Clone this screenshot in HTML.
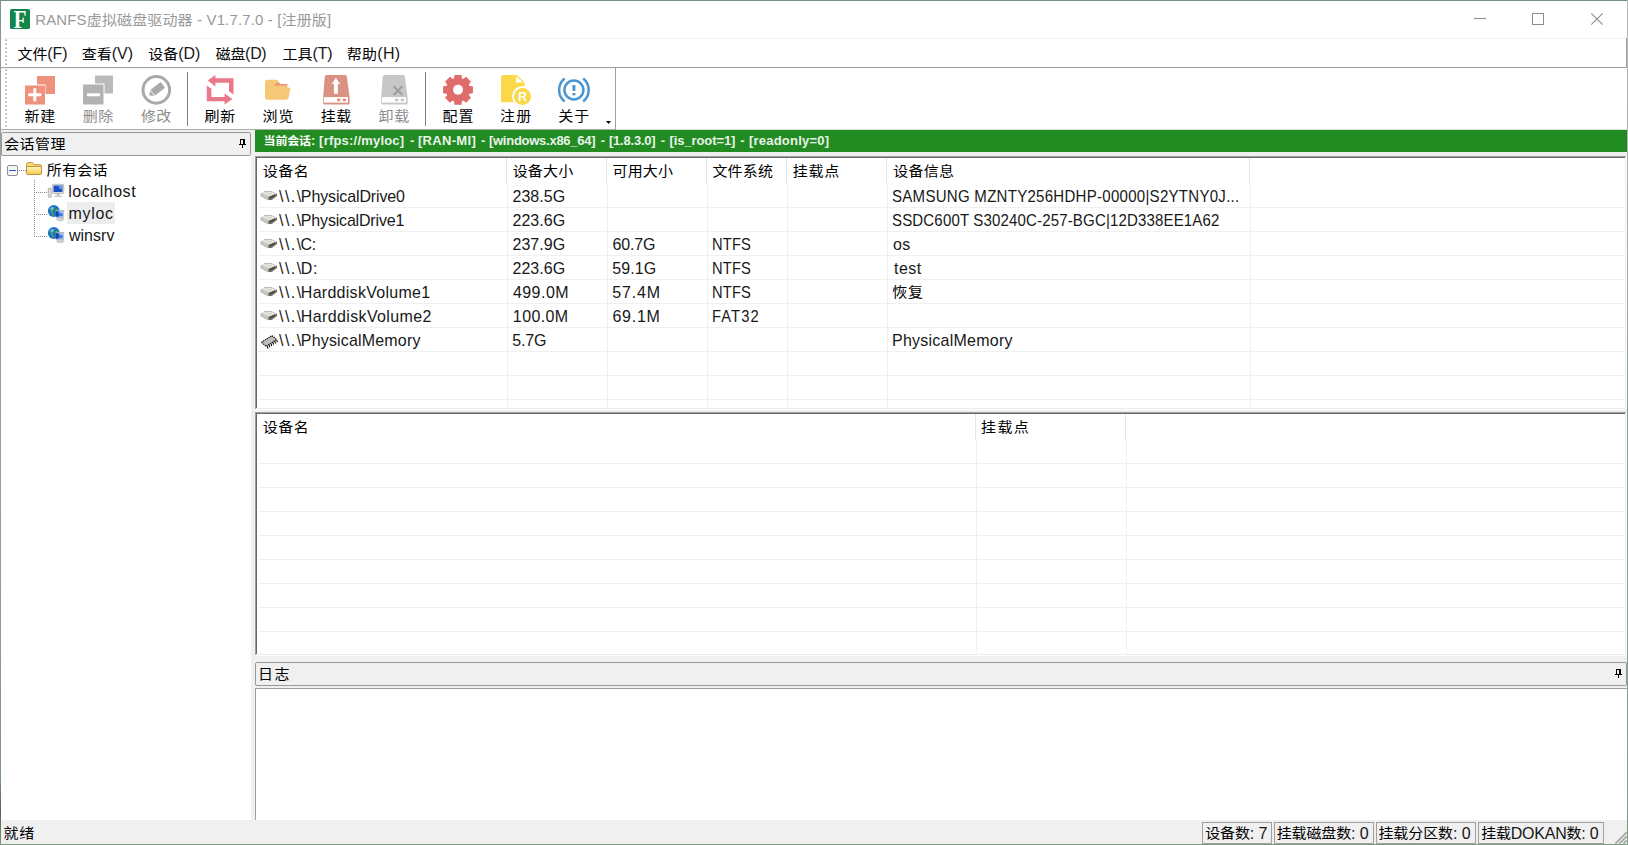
<!DOCTYPE html>
<html lang="zh-CN"><head><meta charset="utf-8"><title>RANFS</title>
<style>
html,body{margin:0;padding:0}
body{width:1628px;height:845px;overflow:hidden;position:relative;background:#fff;
 font-family:"Liberation Sans","Noto Sans CJK SC",sans-serif;font-size:15px;color:#000}
.a{position:absolute}
.t{position:absolute;white-space:pre;line-height:20px;height:20px;transform-origin:0 50%}
.c{display:inline-block;font-size:15px;transform:translateY(var(--cy,0px)) scaleY(.93);transform-origin:0 76%}
.l{display:inline-block;font-size:16px;opacity:.9;transform:scaleY(.98);transform-origin:0 77.7%}
.tt .l{font-size:15px;transform-origin:0 76%;opacity:1}
.b{font-weight:bold}
.b .l{font-size:13px;transform-origin:0 72.6%}
.b .c{font-size:12px;transform-origin:0 70.8%}
svg{position:absolute;overflow:visible}
</style></head>
<body>
<div class="a" style="left:0px;top:0px;width:1628px;height:845px;background:#fff;"></div>
<div class="a" style="left:1px;top:130px;width:1626px;height:690px;background:#f0f0f0;"></div>
<div class="a" style="left:10px;top:9px;width:20px;height:20px;background:#13854b;border-radius:1.5px;overflow:hidden;"><span style="position:absolute;left:-10px;top:-0.9px;width:40px;text-align:center;color:#fff;font:bold 26px/24px 'Liberation Serif',serif;transform:scaleX(.8)">F</span></div>
<div class="a" style="left:1474px;top:18px;width:12px;height:1px;background:#8c8c8c;"></div>
<div class="a" style="left:1532px;top:13px;width:10px;height:10px;border:1px solid #8c8c8c;"></div>
<svg style="left:1591px;top:13px" width="12" height="12" viewBox="0 0 12 12"><path d="M0.3 0.3L11.7 11.7M11.7 0.3L0.3 11.7" stroke="#8c8c8c" stroke-width="1.1" fill="none"/></svg>
<div class="a" style="left:1px;top:38px;width:1625px;height:1px;background:#f1f1fb;"></div>
<div class="a" style="left:1px;top:67px;width:1626px;height:1px;background:#a0a0a0;"></div>
<div class="a" style="left:1626px;top:38px;width:1px;height:30px;background:#a0a0a0;"></div>
<svg style="left:4px;top:39px" width="4" height="27" viewBox="0 0 4 27"><rect x="1" y="0" width="2" height="2" fill="#d2d2d2"/><rect x="2" y="1" width="1" height="1" fill="#a6a6a6"/><rect x="1" y="4" width="2" height="2" fill="#d2d2d2"/><rect x="2" y="5" width="1" height="1" fill="#a6a6a6"/><rect x="1" y="8" width="2" height="2" fill="#d2d2d2"/><rect x="2" y="9" width="1" height="1" fill="#a6a6a6"/><rect x="1" y="12" width="2" height="2" fill="#d2d2d2"/><rect x="2" y="13" width="1" height="1" fill="#a6a6a6"/><rect x="1" y="16" width="2" height="2" fill="#d2d2d2"/><rect x="2" y="17" width="1" height="1" fill="#a6a6a6"/><rect x="1" y="20" width="2" height="2" fill="#d2d2d2"/><rect x="2" y="21" width="1" height="1" fill="#a6a6a6"/><rect x="1" y="24" width="2" height="2" fill="#d2d2d2"/><rect x="2" y="25" width="1" height="1" fill="#a6a6a6"/></svg>
<div class="a" style="left:1px;top:68px;width:614px;height:1px;background:#f3f3fb;"></div>
<div class="a" style="left:1px;top:129px;width:615px;height:1px;background:#adadad;"></div>
<div class="a" style="left:615px;top:68px;width:1px;height:62px;background:#a0a0a0;"></div>
<div class="a" style="left:616px;top:129px;width:1011px;height:1px;background:#e3e3e3;"></div>
<svg style="left:4px;top:69px" width="4" height="59" viewBox="0 0 4 59"><rect x="1" y="0" width="2" height="2" fill="#d2d2d2"/><rect x="2" y="1" width="1" height="1" fill="#a6a6a6"/><rect x="1" y="4" width="2" height="2" fill="#d2d2d2"/><rect x="2" y="5" width="1" height="1" fill="#a6a6a6"/><rect x="1" y="8" width="2" height="2" fill="#d2d2d2"/><rect x="2" y="9" width="1" height="1" fill="#a6a6a6"/><rect x="1" y="12" width="2" height="2" fill="#d2d2d2"/><rect x="2" y="13" width="1" height="1" fill="#a6a6a6"/><rect x="1" y="16" width="2" height="2" fill="#d2d2d2"/><rect x="2" y="17" width="1" height="1" fill="#a6a6a6"/><rect x="1" y="20" width="2" height="2" fill="#d2d2d2"/><rect x="2" y="21" width="1" height="1" fill="#a6a6a6"/><rect x="1" y="24" width="2" height="2" fill="#d2d2d2"/><rect x="2" y="25" width="1" height="1" fill="#a6a6a6"/><rect x="1" y="28" width="2" height="2" fill="#d2d2d2"/><rect x="2" y="29" width="1" height="1" fill="#a6a6a6"/><rect x="1" y="32" width="2" height="2" fill="#d2d2d2"/><rect x="2" y="33" width="1" height="1" fill="#a6a6a6"/><rect x="1" y="36" width="2" height="2" fill="#d2d2d2"/><rect x="2" y="37" width="1" height="1" fill="#a6a6a6"/><rect x="1" y="40" width="2" height="2" fill="#d2d2d2"/><rect x="2" y="41" width="1" height="1" fill="#a6a6a6"/><rect x="1" y="44" width="2" height="2" fill="#d2d2d2"/><rect x="2" y="45" width="1" height="1" fill="#a6a6a6"/><rect x="1" y="48" width="2" height="2" fill="#d2d2d2"/><rect x="2" y="49" width="1" height="1" fill="#a6a6a6"/><rect x="1" y="52" width="2" height="2" fill="#d2d2d2"/><rect x="2" y="53" width="1" height="1" fill="#a6a6a6"/><rect x="1" y="56" width="2" height="2" fill="#d2d2d2"/><rect x="2" y="57" width="1" height="1" fill="#a6a6a6"/></svg>
<div class="a" style="left:187px;top:72px;width:1px;height:54px;background:#808080;"></div>
<div class="a" style="left:425px;top:72px;width:1px;height:54px;background:#808080;"></div>
<svg style="left:606px;top:121px" width="5" height="3" viewBox="0 0 5 3"><path d="M0 0h5l-2.5 3z" fill="#000"/></svg>
<svg style="left:0px;top:68px" width="620" height="62" viewBox="0 68 620 62"><rect x="37" y="76" width="18" height="18" fill="#ee917d"/><rect x="24.5" y="84.5" width="21" height="20" fill="#fff"/><rect x="25" y="85.5" width="20" height="19" fill="#ee917d"/><path d="M28.3 93.3h13v3h-13z M33.3 88.3h3v13h-3z" fill="#fff"/><rect x="95" y="75.5" width="18" height="18" fill="#b9bbb9"/><rect x="82.5" y="83.5" width="22" height="21" fill="#fff"/><rect x="83" y="84.5" width="20.5" height="20" fill="#b1b3b1"/><rect x="87" y="93.3" width="13" height="3" fill="#fff"/><circle cx="156.3" cy="89.9" r="13.3" fill="none" stroke="#a9a9a9" stroke-width="3"/><g transform="rotate(-38 156.3 89.9)"><path d="M147.2 89.9l4.2-3.6h13.2v7.2h-13.2z" fill="#a9a9a9"/><path d="M151.4 86.3v7.2" stroke="#fff" stroke-width="0.9"/></g><path d="M207.7 80.6L215.4 75v3.3H233.5V94.4L229 91.2V82.7H215.4v3.7z" fill="#e8788a"/><path d="M232.4 99L224.6 104.6v-3.3H206.8V85.5L211.4 88.8V97.1H224.6v-3.7z" fill="#e8788a"/><path d="M265 82.2q0-2.4 2.4-2.4h8.6q1.3 0 2.1 1l2.4 3.2h5.3q1.6 0 1.6 1.6v2h1.3q2 0 1.6 1.9l-1.7 8.2q-.5 2.1-2.6 2.1h-18.6q-2.4 0-2.4-2.4z" fill="#f5c878"/><path d="M273.8 85.8l3.8-3.5 2.9 1.7h6.9v1.8z" fill="#f0957c"/><path d="M324.8 76.5q.2-1.5 1.7-1.5h18.6q1.5 0 1.7 1.5l2.8 20.5v6.1q0 1.5-1.5 1.5h-23.4q-1.5 0-1.5-1.5v-6.1z" fill="#d99283"/><rect x="324" y="97.1" width="24" height="5.5" fill="#fff"/><rect x="337" y="98.6" width="3.3" height="2.6" fill="#d99283"/><rect x="342.8" y="98.6" width="3.3" height="2.6" fill="#d99283"/><path d="M335.9 77.8l4.2 6.2h-2.2v9.8h-4v-9.8h-2.2z" fill="#fff"/><path d="M382.8 76.5q.2-1.5 1.7-1.5h18.6q1.5 0 1.7 1.5l2.8 20.5v6.1q0 1.5-1.5 1.5h-23.4q-1.5 0-1.5-1.5v-6.1z" fill="#c6c7c8"/><rect x="382" y="97.1" width="24" height="5.5" fill="#fff"/><rect x="395" y="98.6" width="3.3" height="2.6" fill="#c6c7c8"/><rect x="400.8" y="98.6" width="3.3" height="2.6" fill="#c6c7c8"/><path d="M393.6 86.2l8.8 8.8M402.4 86.2l-8.8 8.8" stroke="#a29c9c" stroke-width="2" fill="none"/><path d="M454.11 78.45 L454.51 74.90 L461.49 74.90 L461.89 78.45 L463.28 79.02 L466.07 76.80 L471.00 81.73 L468.78 84.52 L469.35 85.91 L472.90 86.31 L472.90 93.29 L469.35 93.69 L468.78 95.08 L471.00 97.87 L466.07 102.80 L463.28 100.58 L461.89 101.15 L461.49 104.70 L454.51 104.70 L454.11 101.15 L452.72 100.58 L449.93 102.80 L445.00 97.87 L447.22 95.08 L446.65 93.69 L443.10 93.29 L443.10 86.31 L446.65 85.91 L447.22 84.52 L445.00 81.73 L449.93 76.80 L452.72 79.02Z" fill="#e06b6b"/><circle cx="458" cy="89.8" r="11.6" fill="#e06b6b"/><circle cx="458" cy="89.8" r="5" fill="#fff"/><path d="M501 77.2q0-2.2 2.2-2.2h13.6l7.7 7.3v20h-23.5z" fill="#f9d84a"/><path d="M516 76.2l7.2 6.3h-7.2z" fill="#fff"/><circle cx="522.5" cy="96.4" r="10.4" fill="#fff"/><circle cx="522.5" cy="96.4" r="8.5" fill="#f9d84a"/><text x="522.6" y="101" text-anchor="middle" font-family="'Liberation Sans',sans-serif" font-weight="bold" font-size="12.5" fill="#fff">R</text><circle cx="573.9" cy="90" r="9.5" fill="none" stroke="#4a96d2" stroke-width="2.5"/><path d="M564.59 78.50A14.8 14.8 0 0 0 564.59 101.50" fill="none" stroke="#4a96d2" stroke-width="2.5"/><path d="M583.21 78.50A14.8 14.8 0 0 1 583.21 101.50" fill="none" stroke="#4a96d2" stroke-width="2.5"/><rect x="572.5" y="85" width="2.9" height="6" fill="#4a96d2"/><rect x="572.5" y="93" width="2.9" height="2.3" fill="#4a96d2"/></svg>
<div class="a" style="left:1px;top:156px;width:250px;height:664px;background:#fff;"></div>
<div class="a" style="left:1px;top:132px;width:250px;height:24px;background:#f0f0f0;box-sizing:border-box;border:1px solid #989898;border-radius:2px;"></div>
<svg style="left:239px;top:139px" width="7" height="9" viewBox="0 0 7 9"><path d="M1 0h5v5h1v1h-3v3h-1v-3h-3v-1h1z M2 1v4h2v-4z" fill="#000" fill-rule="evenodd"/></svg>
<svg style="left:0px;top:156px" width="252" height="100" viewBox="0 156 252 100"><rect x="7.5" y="165.5" width="10" height="10" rx="1.5" fill="#f6f6f6" stroke="#8f8f8f"/><rect x="9" y="170" width="7" height="1" fill="#2757d6"/><g fill="#8c8c8c"><rect x="19" y="170" width="1" height="1"/><rect x="21" y="170" width="1" height="1"/><rect x="23" y="170" width="1" height="1"/><rect x="25" y="170" width="1" height="1"/><rect x="34" y="180" width="1" height="1"/><rect x="34" y="182" width="1" height="1"/><rect x="34" y="184" width="1" height="1"/><rect x="34" y="186" width="1" height="1"/><rect x="34" y="188" width="1" height="1"/><rect x="34" y="190" width="1" height="1"/><rect x="34" y="192" width="1" height="1"/><rect x="34" y="194" width="1" height="1"/><rect x="34" y="196" width="1" height="1"/><rect x="34" y="198" width="1" height="1"/><rect x="34" y="200" width="1" height="1"/><rect x="34" y="202" width="1" height="1"/><rect x="34" y="204" width="1" height="1"/><rect x="34" y="206" width="1" height="1"/><rect x="34" y="208" width="1" height="1"/><rect x="34" y="210" width="1" height="1"/><rect x="34" y="212" width="1" height="1"/><rect x="34" y="214" width="1" height="1"/><rect x="34" y="216" width="1" height="1"/><rect x="34" y="218" width="1" height="1"/><rect x="34" y="220" width="1" height="1"/><rect x="34" y="222" width="1" height="1"/><rect x="34" y="224" width="1" height="1"/><rect x="34" y="226" width="1" height="1"/><rect x="34" y="228" width="1" height="1"/><rect x="34" y="230" width="1" height="1"/><rect x="34" y="232" width="1" height="1"/><rect x="34" y="234" width="1" height="1"/><rect x="34" y="236" width="1" height="1"/><rect x="36" y="192" width="1" height="1"/><rect x="38" y="192" width="1" height="1"/><rect x="40" y="192" width="1" height="1"/><rect x="42" y="192" width="1" height="1"/><rect x="44" y="192" width="1" height="1"/><rect x="46" y="192" width="1" height="1"/><rect x="36" y="214" width="1" height="1"/><rect x="38" y="214" width="1" height="1"/><rect x="40" y="214" width="1" height="1"/><rect x="42" y="214" width="1" height="1"/><rect x="44" y="214" width="1" height="1"/><rect x="46" y="214" width="1" height="1"/><rect x="36" y="236" width="1" height="1"/><rect x="38" y="236" width="1" height="1"/><rect x="40" y="236" width="1" height="1"/><rect x="42" y="236" width="1" height="1"/><rect x="44" y="236" width="1" height="1"/><rect x="46" y="236" width="1" height="1"/></g><defs><linearGradient id="fg" x1="0" y1="0" x2="0" y2="1"><stop offset="0" stop-color="#fff7c4"/><stop offset="1" stop-color="#f2cb52"/></linearGradient></defs><path d="M26.5 173.5v-9q0-2 2-2h3.2q1 0 1.6.9l.9 1.3h5.6q1.7 0 1.7 1.7v1.6" fill="#f7dc7c" stroke="#c4922b"/><rect x="26.5" y="166.5" width="15" height="8" rx="1.3" fill="url(#fg)" stroke="#c4922b"/><rect x="67" y="202" width="48" height="22" fill="#ededed"/><rect x="48.3" y="188.3" width="2.8" height="9" rx=".6" fill="#e2e2e2" stroke="#8c8c8c" stroke-width=".6"/><rect x="52.3" y="184.3" width="11.4" height="9.2" rx=".8" fill="#e9e9e9" stroke="#9a9a9a" stroke-width=".6"/><rect x="53.5" y="185.5" width="9" height="6.6" fill="#1d4fc4"/><path d="M58 185.5h4.5v3.2l-2 .8z" fill="#6b9be8"/><rect x="56.8" y="193.6" width="2.6" height="2" fill="#b8b8b8"/><rect x="54.5" y="195.5" width="7.4" height="1.5" rx=".6" fill="#c9c9c9"/><ellipse cx="60.3" cy="219.3" rx="3.8" ry="1.4" fill="#d4d4d4" stroke="#a8a8a8" stroke-width=".5"/><circle cx="53.8" cy="211" r="5.9" fill="#1f6fd6"/><path d="M50 209 q1.5-2.5 4-2.2 l.5 2-2 1.2.8 2.5-2 .5z M55 209.5 l2.5-1 1.5 1.5-.5 2.5-2.5.5z M51.5 213 l2 .3 .6 2-1.4 1.2z" fill="#3fae3a"/><circle cx="52" cy="208.6" r="1.6" fill="#8cc4ff" opacity=".7"/><rect x="56.2" y="210.5" width="7.6" height="7" fill="#e4ebf5" stroke="#8e9db5" stroke-width=".6"/><rect x="57.2" y="211.5" width="5.6" height="5" fill="#3b7be0"/><path d="M57.2 211.5 h5.6 v2.2z" fill="#9cc6f7"/><rect x="56" y="211.2" width="2.6" height="5.5" fill="#173fa8"/><ellipse cx="60.3" cy="241.3" rx="3.8" ry="1.4" fill="#d4d4d4" stroke="#a8a8a8" stroke-width=".5"/><circle cx="53.8" cy="233" r="5.9" fill="#1f6fd6"/><path d="M50 231 q1.5-2.5 4-2.2 l.5 2-2 1.2.8 2.5-2 .5z M55 231.5 l2.5-1 1.5 1.5-.5 2.5-2.5.5z M51.5 235 l2 .3 .6 2-1.4 1.2z" fill="#3fae3a"/><circle cx="52" cy="230.6" r="1.6" fill="#8cc4ff" opacity=".7"/><rect x="56.2" y="232.5" width="7.6" height="7" fill="#e4ebf5" stroke="#8e9db5" stroke-width=".6"/><rect x="57.2" y="233.5" width="5.6" height="5" fill="#3b7be0"/><path d="M57.2 233.5 h5.6 v2.2z" fill="#9cc6f7"/><rect x="56" y="233.2" width="2.6" height="5.5" fill="#173fa8"/></svg>
<div class="a" style="left:255px;top:130px;width:1372px;height:22px;background:#228b22;"></div>
<div class="a" style="left:255px;top:156px;width:1372px;height:254px;background:#fff;"></div><div class="a" style="left:255px;top:156px;width:1371px;height:1px;background:#a0a0a0;"></div><div class="a" style="left:255px;top:156px;width:1px;height:253px;background:#a0a0a0;"></div><div class="a" style="left:256px;top:157px;width:1369px;height:1px;background:#696969;"></div><div class="a" style="left:256px;top:157px;width:1px;height:251px;background:#696969;"></div><div class="a" style="left:256px;top:408px;width:1370px;height:1px;background:#ececec;"></div><div class="a" style="left:1625px;top:157px;width:1px;height:252px;background:#ececec;"></div><div class="a" style="left:258px;top:207px;width:1367px;height:1px;background:#f0f0f0;"></div><div class="a" style="left:258px;top:231px;width:1367px;height:1px;background:#f0f0f0;"></div><div class="a" style="left:258px;top:255px;width:1367px;height:1px;background:#f0f0f0;"></div><div class="a" style="left:258px;top:279px;width:1367px;height:1px;background:#f0f0f0;"></div><div class="a" style="left:258px;top:303px;width:1367px;height:1px;background:#f0f0f0;"></div><div class="a" style="left:258px;top:327px;width:1367px;height:1px;background:#f0f0f0;"></div><div class="a" style="left:258px;top:351px;width:1367px;height:1px;background:#f0f0f0;"></div><div class="a" style="left:258px;top:375px;width:1367px;height:1px;background:#f0f0f0;"></div><div class="a" style="left:258px;top:399px;width:1367px;height:1px;background:#f0f0f0;"></div><div class="a" style="left:506px;top:158px;width:1px;height:26px;background:#e5e5e5;"></div><div class="a" style="left:507px;top:184px;width:1px;height:224px;background:#f0f0f0;"></div><div class="a" style="left:606px;top:158px;width:1px;height:26px;background:#e5e5e5;"></div><div class="a" style="left:607px;top:184px;width:1px;height:224px;background:#f0f0f0;"></div><div class="a" style="left:706px;top:158px;width:1px;height:26px;background:#e5e5e5;"></div><div class="a" style="left:707px;top:184px;width:1px;height:224px;background:#f0f0f0;"></div><div class="a" style="left:786px;top:158px;width:1px;height:26px;background:#e5e5e5;"></div><div class="a" style="left:787px;top:184px;width:1px;height:224px;background:#f0f0f0;"></div><div class="a" style="left:886px;top:158px;width:1px;height:26px;background:#e5e5e5;"></div><div class="a" style="left:887px;top:184px;width:1px;height:224px;background:#f0f0f0;"></div><div class="a" style="left:1249px;top:158px;width:1px;height:26px;background:#e5e5e5;"></div><div class="a" style="left:1250px;top:184px;width:1px;height:224px;background:#f0f0f0;"></div>
<svg style="left:257px;top:184px" width="24" height="170" viewBox="257 184 24 170"><g transform="translate(0 0)"><path d="M261 193.4L268.6 196.6V199.9L261.2 196z" fill="#cfcfcf" stroke="#8f958f" stroke-width=".8"/><path d="M268.6 196.5L277 193.3V196L271.8 200H268.6z" fill="#6f6f74"/><path d="M269 196.9L275 194.6V196.2L269 198.6z" fill="#5c4208"/><path d="M261 193.3L264.3 191H271.8L277 193.3L268.8 196.7z" fill="#dedcdc"/><path d="M264.3 191.4H271.8" stroke="#b8b8b8" stroke-width=".9"/></g><g transform="translate(0 24)"><path d="M261 193.4L268.6 196.6V199.9L261.2 196z" fill="#cfcfcf" stroke="#8f958f" stroke-width=".8"/><path d="M268.6 196.5L277 193.3V196L271.8 200H268.6z" fill="#6f6f74"/><path d="M269 196.9L275 194.6V196.2L269 198.6z" fill="#5c4208"/><path d="M261 193.3L264.3 191H271.8L277 193.3L268.8 196.7z" fill="#dedcdc"/><path d="M264.3 191.4H271.8" stroke="#b8b8b8" stroke-width=".9"/></g><g transform="translate(0 48)"><path d="M261 193.4L268.6 196.6V199.9L261.2 196z" fill="#cfcfcf" stroke="#8f958f" stroke-width=".8"/><path d="M268.6 196.5L277 193.3V196L271.8 200H268.6z" fill="#6f6f74"/><path d="M269 196.9L275 194.6V196.2L269 198.6z" fill="#5c4208"/><path d="M261 193.3L264.3 191H271.8L277 193.3L268.8 196.7z" fill="#dedcdc"/><path d="M264.3 191.4H271.8" stroke="#b8b8b8" stroke-width=".9"/></g><g transform="translate(0 72)"><path d="M261 193.4L268.6 196.6V199.9L261.2 196z" fill="#cfcfcf" stroke="#8f958f" stroke-width=".8"/><path d="M268.6 196.5L277 193.3V196L271.8 200H268.6z" fill="#6f6f74"/><path d="M269 196.9L275 194.6V196.2L269 198.6z" fill="#5c4208"/><path d="M261 193.3L264.3 191H271.8L277 193.3L268.8 196.7z" fill="#dedcdc"/><path d="M264.3 191.4H271.8" stroke="#b8b8b8" stroke-width=".9"/></g><g transform="translate(0 96)"><path d="M261 193.4L268.6 196.6V199.9L261.2 196z" fill="#cfcfcf" stroke="#8f958f" stroke-width=".8"/><path d="M268.6 196.5L277 193.3V196L271.8 200H268.6z" fill="#6f6f74"/><path d="M269 196.9L275 194.6V196.2L269 198.6z" fill="#5c4208"/><path d="M261 193.3L264.3 191H271.8L277 193.3L268.8 196.7z" fill="#dedcdc"/><path d="M264.3 191.4H271.8" stroke="#b8b8b8" stroke-width=".9"/></g><g transform="translate(0 120)"><path d="M261 193.4L268.6 196.6V199.9L261.2 196z" fill="#cfcfcf" stroke="#8f958f" stroke-width=".8"/><path d="M268.6 196.5L277 193.3V196L271.8 200H268.6z" fill="#6f6f74"/><path d="M269 196.9L275 194.6V196.2L269 198.6z" fill="#5c4208"/><path d="M261 193.3L264.3 191H271.8L277 193.3L268.8 196.7z" fill="#dedcdc"/><path d="M264.3 191.4H271.8" stroke="#b8b8b8" stroke-width=".9"/></g><path d="M261.4 342.3L272 335.6L276.6 339.5L266.2 346.3z" fill="#bdbdbd" stroke="#000" stroke-width="1.1" stroke-dasharray="1.3 .8"/><path d="M267.2 346.2l.7 2.3M269.1 344.9l.7 2.3M271.0 343.7l.7 2.3M272.9 342.4l.7 2.3M274.8 341.2l.7 2.3M276.7 339.9l.7 2.3" stroke="#000" stroke-width="1.1" fill="none"/></svg>
<div class="a" style="left:255px;top:412px;width:1372px;height:244px;background:#fff;"></div><div class="a" style="left:255px;top:412px;width:1371px;height:1px;background:#a0a0a0;"></div><div class="a" style="left:255px;top:412px;width:1px;height:243px;background:#a0a0a0;"></div><div class="a" style="left:256px;top:413px;width:1369px;height:1px;background:#696969;"></div><div class="a" style="left:256px;top:413px;width:1px;height:241px;background:#696969;"></div><div class="a" style="left:256px;top:654px;width:1370px;height:1px;background:#ececec;"></div><div class="a" style="left:1625px;top:413px;width:1px;height:242px;background:#ececec;"></div><div class="a" style="left:258px;top:463px;width:1367px;height:1px;background:#f0f0f0;"></div><div class="a" style="left:258px;top:487px;width:1367px;height:1px;background:#f0f0f0;"></div><div class="a" style="left:258px;top:511px;width:1367px;height:1px;background:#f0f0f0;"></div><div class="a" style="left:258px;top:535px;width:1367px;height:1px;background:#f0f0f0;"></div><div class="a" style="left:258px;top:559px;width:1367px;height:1px;background:#f0f0f0;"></div><div class="a" style="left:258px;top:583px;width:1367px;height:1px;background:#f0f0f0;"></div><div class="a" style="left:258px;top:607px;width:1367px;height:1px;background:#f0f0f0;"></div><div class="a" style="left:258px;top:631px;width:1367px;height:1px;background:#f0f0f0;"></div><div class="a" style="left:975px;top:414px;width:1px;height:26px;background:#e5e5e5;"></div><div class="a" style="left:976px;top:440px;width:1px;height:214px;background:#f0f0f0;"></div><div class="a" style="left:1125px;top:414px;width:1px;height:26px;background:#e5e5e5;"></div><div class="a" style="left:1126px;top:440px;width:1px;height:214px;background:#f0f0f0;"></div>
<div class="a" style="left:255px;top:662px;width:1372px;height:24px;background:#f0f0f0;box-sizing:border-box;border:1px solid #989898;border-radius:2px;"></div>
<svg style="left:1615px;top:669px" width="7" height="9" viewBox="0 0 7 9"><path d="M1 0h5v5h1v1h-3v3h-1v-3h-3v-1h1z M2 1v4h2v-4z" fill="#000" fill-rule="evenodd"/></svg>
<div class="a" style="left:255px;top:688px;width:1372px;height:132px;background:#fff;box-sizing:border-box;border-top:1px solid #a0a0a0;border-left:1px solid #a0a0a0;"></div>
<div class="a" style="left:1px;top:820px;width:1626px;height:24px;background:#f0f0f0;"></div>
<div class="a" style="left:1202px;top:822px;width:70px;height:21.6px;box-sizing:border-box;border:1px solid #a0a0a0;"></div>
<div class="a" style="left:1274px;top:822px;width:100px;height:21.6px;box-sizing:border-box;border:1px solid #a0a0a0;"></div>
<div class="a" style="left:1376px;top:822px;width:100px;height:21.6px;box-sizing:border-box;border:1px solid #a0a0a0;"></div>
<div class="a" style="left:1478px;top:822px;width:126px;height:21.6px;box-sizing:border-box;border:1px solid #a0a0a0;"></div>
<svg style="left:1614px;top:831px" width="13" height="13" viewBox="0 0 13 13"><path d="M12.6 1.4L1.4 12.6M12.6 5.4L5.4 12.6M12.6 9.4L9.4 12.6" stroke="#a2a2a2" stroke-width="1.5" fill="none"/></svg>
<div class="a" style="left:0px;top:0px;width:1628px;height:1px;background:#6f8e8e;"></div>
<div class="a" style="left:0px;top:0px;width:1px;height:845px;background:linear-gradient(#7c9396,#9e9e9e 15%,#9a9d9b 60%,#7c9a80 92%,#54605a 96%,#7c9a80);"></div>
<div class="a" style="left:0px;top:844px;width:1628px;height:1px;background:#7e9a82;"></div>
<div class="a" style="left:1627px;top:0px;width:1px;height:845px;background:linear-gradient(#b8b8b8,#b4adb4 20%,#8c9a9a 46%,#8c9a9a 80%,#7c9a82);"></div>
<span id="ttl" class="t tt" style="left:35.18px;top:9.60px;font-size:15px;letter-spacing:0.142px;color:#999;"><span class="l">RANFS</span><span class="c">虚拟磁盘驱动器</span><span class="l"> - V1.7.7.0 - [</span><span class="c">注册版</span><span class="l">]</span></span>
<span id="m1" class="t" style="left:17.61px;top:44.20px;font-size:15px;letter-spacing:-0.146px;color:#000;"><span class="c">文件</span><span class="l">(F)</span></span>
<span id="m2" class="t" style="left:81.85px;top:44.20px;font-size:15px;letter-spacing:-0.032px;color:#000;"><span class="c">查看</span><span class="l">(V)</span></span>
<span id="m3" class="t" style="left:148.22px;top:44.20px;font-size:15px;letter-spacing:-0.016px;color:#000;"><span class="c">设备</span><span class="l">(D)</span></span>
<span id="m4" class="t" style="left:215.72px;top:44.20px;font-size:15px;letter-spacing:-0.312px;color:#000;"><span class="c">磁盘</span><span class="l">(D)</span></span>
<span id="m5" class="t" style="left:282.60px;top:44.20px;font-size:15px;letter-spacing:-0.095px;color:#000;"><span class="c">工具</span><span class="l">(T)</span></span>
<span id="m6" class="t" style="left:346.82px;top:44.20px;font-size:15px;letter-spacing:0.258px;color:#000;"><span class="c">帮助</span><span class="l">(H)</span></span>
<span id="tb0" class="t" style="left:24.61px;top:106.10px;font-size:15px;letter-spacing:0.761px;color:#000;"><span class="c">新建</span></span>
<span id="tb1" class="t" style="left:82.66px;top:106.10px;font-size:15px;letter-spacing:0.474px;color:#8d8d8d;"><span class="c">删除</span></span>
<span id="tb2" class="t" style="left:140.88px;top:106.10px;font-size:15px;letter-spacing:0.423px;color:#8d8d8d;"><span class="c">修改</span></span>
<span id="tb3" class="t" style="left:204.59px;top:106.10px;font-size:15px;letter-spacing:0.553px;color:#000;"><span class="c">刷新</span></span>
<span id="tb4" class="t" style="left:262.44px;top:106.10px;font-size:15px;letter-spacing:1.156px;color:#000;"><span class="c">浏览</span></span>
<span id="tb5" class="t" style="left:320.68px;top:106.10px;font-size:15px;letter-spacing:0.700px;color:#000;"><span class="c">挂载</span></span>
<span id="tb6" class="t" style="left:378.62px;top:106.10px;font-size:15px;letter-spacing:0.735px;color:#8d8d8d;"><span class="c">卸载</span></span>
<span id="tb7" class="t" style="left:442.62px;top:106.10px;font-size:15px;letter-spacing:1.010px;color:#000;"><span class="c">配置</span></span>
<span id="tb8" class="t" style="left:500.04px;top:106.10px;font-size:15px;letter-spacing:1.140px;color:#000;"><span class="c">注册</span></span>
<span id="tb9" class="t" style="left:558.33px;top:106.10px;font-size:15px;letter-spacing:1.018px;color:#000;"><span class="c">关于</span></span>
<span id="ph" class="t" style="left:4.16px;top:134.40px;font-size:15px;letter-spacing:0.440px;color:#000;"><span class="c">会话管理</span></span>
<span id="tr0" class="t" style="left:46.76px;top:159.70px;font-size:15px;letter-spacing:0.209px;color:#000;"><span class="c">所有会话</span></span>
<span id="tr1" class="t  f16" style="left:68.27px;top:181.55px;font-size:16px;letter-spacing:0.521px;color:#000;"><span class="l">localhost</span></span>
<span id="tr2" class="t  f16" style="left:68.42px;top:203.55px;font-size:16px;letter-spacing:0.733px;color:#000;"><span class="l">myloc</span></span>
<span id="tr3" class="t  f16" style="left:68.94px;top:225.55px;font-size:16px;letter-spacing:0.033px;color:#000;"><span class="l">winsrv</span></span>
<span id="g0" class="t b" style="left:263.53px;top:130.74px;font-size:12px;letter-spacing:-0.134px;color:#fff;"><span class="c">当前会话</span><span class="l">:</span></span>
<span id="g1" class="t b" style="left:319.12px;top:130.74px;font-size:12px;letter-spacing:0.206px;color:#fff;"><span class="l">[rfps://myloc]</span></span>
<span id="g2" class="t b" style="left:409.92px;top:130.74px;font-size:12px;letter-spacing:0.000px;color:#fff;"><span class="l">-</span></span>
<span id="g3" class="t b" style="left:417.94px;top:130.74px;font-size:12px;letter-spacing:0.311px;color:#fff;"><span class="l">[RAN-MI]</span></span>
<span id="g4" class="t b" style="left:480.89px;top:130.74px;font-size:12px;letter-spacing:0.000px;color:#fff;"><span class="l">-</span></span>
<span id="g5" class="t b" style="left:488.94px;top:130.74px;font-size:12px;letter-spacing:-0.261px;color:#fff;"><span class="l">[windows.x86_64]</span></span>
<span id="g6" class="t b" style="left:600.63px;top:130.74px;font-size:12px;letter-spacing:0.000px;color:#fff;"><span class="l">-</span></span>
<span id="g7" class="t b" style="left:608.94px;top:130.74px;font-size:12px;letter-spacing:-0.208px;color:#fff;"><span class="l">[1.8.3.0]</span></span>
<span id="g8" class="t b" style="left:660.79px;top:130.74px;font-size:12px;letter-spacing:0.000px;color:#fff;"><span class="l">-</span></span>
<span id="g9" class="t b" style="left:669.53px;top:130.74px;font-size:12px;letter-spacing:-0.095px;color:#fff;"><span class="l">[is_root=1]</span></span>
<span id="g10" class="t b" style="left:740.36px;top:130.74px;font-size:12px;letter-spacing:0.000px;color:#fff;"><span class="l">-</span></span>
<span id="g11" class="t b" style="left:748.94px;top:130.74px;font-size:12px;letter-spacing:0.217px;color:#fff;"><span class="l">[readonly=0]</span></span>
<span id="h1" class="t" style="left:262.68px;top:160.80px;font-size:15px;letter-spacing:0.524px;color:#000;"><span class="c">设备名</span></span>
<span id="h2" class="t" style="left:512.68px;top:160.80px;font-size:15px;letter-spacing:0.170px;color:#000;"><span class="c">设备大小</span></span>
<span id="h3" class="t" style="left:612.46px;top:160.80px;font-size:15px;letter-spacing:0.195px;color:#000;"><span class="c">可用大小</span></span>
<span id="h4" class="t" style="left:712.39px;top:160.80px;font-size:15px;letter-spacing:0.201px;color:#000;"><span class="c">文件系统</span></span>
<span id="h5" class="t" style="left:792.68px;top:160.80px;font-size:15px;letter-spacing:0.774px;color:#000;"><span class="c">挂载点</span></span>
<span id="h6" class="t" style="left:893.15px;top:160.80px;font-size:15px;letter-spacing:0.279px;color:#000;"><span class="c">设备信息</span></span>
<span id="r0p" class="t  f16" style="left:279.12px;top:187.35px;font-size:16px;letter-spacing:1.400px;color:#000;"><span class="l">\\.\</span></span><span id="r0a" class="t  f16" style="left:300.85px;top:187.35px;font-size:16px;letter-spacing:-0.127px;color:#000;"><span class="l">PhysicalDrive0</span></span>
<span id="r0b" class="t  f16" style="left:512.52px;top:187.35px;font-size:16px;letter-spacing:0.018px;color:#000;"><span class="l">238.5G</span></span>
<span id="r0e" class="t  f16" style="left:892.44px;top:187.35px;font-size:16px;letter-spacing:0.282px;color:#000;transform:scaleX(0.94);"><span class="l">SAMSUNG MZNTY256HDHP-00000|S2YTNY0J...</span></span>
<span id="r1p" class="t  f16" style="left:279.12px;top:211.35px;font-size:16px;letter-spacing:1.400px;color:#000;"><span class="l">\\.\</span></span><span id="r1a" class="t  f16" style="left:300.85px;top:211.35px;font-size:16px;letter-spacing:-0.179px;color:#000;"><span class="l">PhysicalDrive1</span></span>
<span id="r1b" class="t  f16" style="left:512.52px;top:211.35px;font-size:16px;letter-spacing:0.018px;color:#000;"><span class="l">223.6G</span></span>
<span id="r1e" class="t  f16" style="left:892.44px;top:211.35px;font-size:16px;letter-spacing:0.155px;color:#000;transform:scaleX(0.94);"><span class="l">SSDC600T S30240C-257-BGC|12D338EE1A62</span></span>
<span id="r2p" class="t  f16" style="left:279.12px;top:235.35px;font-size:16px;letter-spacing:1.400px;color:#000;"><span class="l">\\.\</span></span><span id="r2a" class="t  f16" style="left:300.52px;top:235.35px;font-size:16px;letter-spacing:-0.361px;color:#000;"><span class="l">C:</span></span>
<span id="r2b" class="t  f16" style="left:512.52px;top:235.35px;font-size:16px;letter-spacing:0.018px;color:#000;"><span class="l">237.9G</span></span>
<span id="r2c" class="t  f16" style="left:612.39px;top:235.35px;font-size:16px;letter-spacing:-0.131px;color:#000;"><span class="l">60.7G</span></span>
<span id="r2d" class="t  f16" style="left:712.35px;top:235.35px;font-size:16px;letter-spacing:0.151px;color:#000;transform:scaleX(0.92);"><span class="l">NTFS</span></span>
<span id="r2e" class="t  f16" style="left:892.99px;top:235.35px;font-size:16px;letter-spacing:0.299px;color:#000;"><span class="l">os</span></span>
<span id="r3p" class="t  f16" style="left:279.12px;top:259.35px;font-size:16px;letter-spacing:1.400px;color:#000;"><span class="l">\\.\</span></span><span id="r3a" class="t  f16" style="left:300.85px;top:259.35px;font-size:16px;letter-spacing:0.538px;color:#000;"><span class="l">D:</span></span>
<span id="r3b" class="t  f16" style="left:512.52px;top:259.35px;font-size:16px;letter-spacing:0.018px;color:#000;"><span class="l">223.6G</span></span>
<span id="r3c" class="t  f16" style="left:612.27px;top:259.35px;font-size:16px;letter-spacing:0.060px;color:#000;"><span class="l">59.1G</span></span>
<span id="r3d" class="t  f16" style="left:712.35px;top:259.35px;font-size:16px;letter-spacing:0.151px;color:#000;transform:scaleX(0.92);"><span class="l">NTFS</span></span>
<span id="r3e" class="t  f16" style="left:894.06px;top:259.35px;font-size:16px;letter-spacing:0.418px;color:#000;"><span class="l">test</span></span>
<span id="r4p" class="t  f16" style="left:279.12px;top:283.35px;font-size:16px;letter-spacing:1.400px;color:#000;"><span class="l">\\.\</span></span><span id="r4a" class="t  f16" style="left:300.85px;top:283.35px;font-size:16px;letter-spacing:0.273px;color:#000;"><span class="l">HarddiskVolume1</span></span>
<span id="r4b" class="t  f16" style="left:512.88px;top:283.35px;font-size:16px;letter-spacing:0.467px;color:#000;"><span class="l">499.0M</span></span>
<span id="r4c" class="t  f16" style="left:612.27px;top:283.35px;font-size:16px;letter-spacing:0.809px;color:#000;"><span class="l">57.4M</span></span>
<span id="r4d" class="t  f16" style="left:712.35px;top:283.35px;font-size:16px;letter-spacing:0.151px;color:#000;transform:scaleX(0.92);"><span class="l">NTFS</span></span>
<span id="r4e" class="t" style="left:892.28px;top:283.70px;font-size:15px;letter-spacing:0.776px;color:#000;--cy:-2.2px;"><span class="c">恢复</span></span>
<span id="r5p" class="t  f16" style="left:279.12px;top:307.35px;font-size:16px;letter-spacing:1.400px;color:#000;"><span class="l">\\.\</span></span><span id="r5a" class="t  f16" style="left:300.85px;top:307.35px;font-size:16px;letter-spacing:0.366px;color:#000;"><span class="l">HarddiskVolume2</span></span>
<span id="r5b" class="t  f16" style="left:512.85px;top:307.35px;font-size:16px;letter-spacing:0.396px;color:#000;"><span class="l">100.0M</span></span>
<span id="r5c" class="t  f16" style="left:612.39px;top:307.35px;font-size:16px;letter-spacing:0.775px;color:#000;"><span class="l">69.1M</span></span>
<span id="r5d" class="t  f16" style="left:712.35px;top:307.35px;font-size:16px;letter-spacing:1.200px;color:#000;transform:scaleX(0.92);"><span class="l">FAT32</span></span>
<span id="r6p" class="t  f16" style="left:279.12px;top:331.35px;font-size:16px;letter-spacing:1.400px;color:#000;"><span class="l">\\.\</span></span><span id="r6a" class="t  f16" style="left:300.85px;top:331.35px;font-size:16px;letter-spacing:0.170px;color:#000;"><span class="l">PhysicalMemory</span></span>
<span id="r6b" class="t  f16" style="left:512.27px;top:331.35px;font-size:16px;letter-spacing:-0.162px;color:#000;"><span class="l">5.7G</span></span>
<span id="r6e" class="t  f16" style="left:892.00px;top:331.35px;font-size:16px;letter-spacing:0.243px;color:#000;"><span class="l">PhysicalMemory</span></span>
<span id="k1" class="t" style="left:262.68px;top:416.80px;font-size:15px;letter-spacing:0.524px;color:#000;"><span class="c">设备名</span></span>
<span id="k2" class="t" style="left:981.01px;top:416.80px;font-size:15px;letter-spacing:1.400px;color:#000;"><span class="c">挂载点</span></span>
<span id="lg" class="t" style="left:258.07px;top:664.10px;font-size:15px;letter-spacing:1.400px;color:#000;"><span class="c">日志</span></span>
<span id="s0" class="t" style="left:3.58px;top:823.90px;font-size:15px;letter-spacing:0.566px;color:#000;--cy:-1px;"><span class="c">就绪</span></span>
<span id="s1" class="t" style="left:1205.15px;top:823.90px;font-size:15px;letter-spacing:-0.118px;color:#000;--cy:-1px;"><span class="c">设备数</span><span class="l">: 7</span></span>
<span id="s2" class="t" style="left:1276.68px;top:823.90px;font-size:15px;letter-spacing:-0.129px;color:#000;--cy:-1px;"><span class="c">挂载磁盘数</span><span class="l">: 0</span></span>
<span id="s3" class="t" style="left:1378.43px;top:823.90px;font-size:15px;letter-spacing:-0.082px;color:#000;--cy:-1px;"><span class="c">挂载分区数</span><span class="l">: 0</span></span>
<span id="s4" class="t" style="left:1481.23px;top:823.90px;font-size:15px;letter-spacing:-0.230px;color:#000;--cy:-1px;"><span class="c">挂载</span><span class="l">DOKAN</span><span class="c">数</span><span class="l">: 0</span></span>
</body></html>
